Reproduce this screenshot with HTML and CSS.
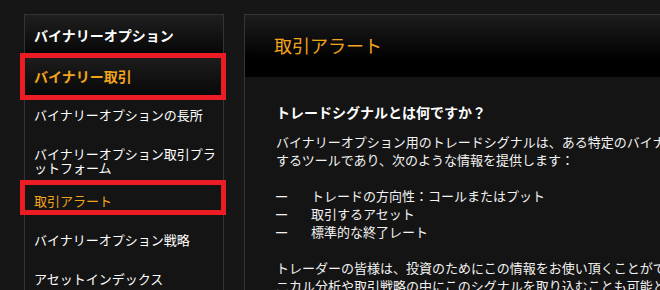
FILE: index.html
```html
<!DOCTYPE html>
<html lang="ja">
<head>
<meta charset="utf-8">
<title>取引アラート</title>
<link rel="stylesheet" href="styles.css">
</head>
<body>
<div class="page">
  <aside class="side">
    <div class="side-head">バイナリーオプション</div>
    <ul class="side-list">
      <li class="item active mark mark-a"><a href="#">バイナリー取引</a></li>
      <li class="item"><a href="#">バイナリーオプションの長所</a></li>
      <li class="item item-wrap"><a href="#">バイナリーオプション取引プラットフォーム</a></li>
      <li class="item current mark mark-b"><a href="#">取引アラート</a></li>
      <li class="item"><a href="#">バイナリーオプション戦略</a></li>
      <li class="item"><a href="#">アセットインデックス</a></li>
    </ul>
  </aside>
  <main class="panel">
    <div class="panel-head"><h1 class="panel-title">取引アラート</h1></div>
    <div class="panel-body">
      <h2 class="q">トレードシグナルとは何ですか？</h2>
      <p class="text">バイナリーオプション用のトレードシグナルは、ある特定のバイナリーオプション取引について推奨<br>するツールであり、次のような情報を提供します：</p>
      <ul class="dash-list">
        <li><span class="dash">—</span>トレードの方向性：コールまたはプット</li>
        <li><span class="dash">—</span>取引するアセット</li>
        <li><span class="dash">—</span>標準的な終了レート</li>
      </ul>
      <p class="text">トレーダーの皆様は、投資のためにこの情報をお使い頂くことができます。また、テク<br>ニカル分析や取引戦略の中にこのシグナルを取り込むことも可能となります。</p>
    </div>
  </main>
</div>
</body>
</html>
```

FILE: styles.css
```css
html, body {
  margin: 0;
  padding: 0;
  overflow: hidden;
  background: #161616;
}
body {
  font-family: "Noto Sans CJK JP", "Noto Sans", sans-serif;
  color: #fff;
  width: 660px;
  height: 290px;
}
.page {
  display: flex;
  align-items: flex-start;
  gap: 20px;
  padding: 14px 0 0 24px;
  width: 900px;
}
.side {
  width: 200px;
  box-sizing: border-box;
  border: 1px solid #343434;
  background: #141414;
  flex: none;
}
.side-head {
  padding: 12px 5px 14px 9px;
  font-size: 14px;
  line-height: 16px;
  font-weight: bold;
  color: #fff;
  background: linear-gradient(#1f1f1f, #050505);
}
.side-list {
  list-style: none;
  margin: 0;
  padding: 0 0 20px;
}
.item {
  position: relative;
}
.item a {
  display: block;
  padding: 12px 5px 13px 9px;
  font-size: 13px;
  line-height: 14px;
  color: #fff;
  text-decoration: none;
  line-break: normal;
}
.item-wrap a {
  padding-bottom: 7px;
}
.item.active a {
  font-size: 14px;
  font-weight: bold;
  color: #f2a41c;
  background: linear-gradient(#1d1d1d, #080808);
}
.item.current a {
  color: #f2a41c;
}
.mark::after {
  content: "";
  position: absolute;
  border: 5px solid #ec1c24;
  pointer-events: none;
}
.mark-a::after {
  left: -5px;
  right: -3px;
  top: -4px;
  bottom: -4px;
}
.mark-b::after {
  left: -5px;
  right: -3px;
  top: -2px;
  bottom: 6px;
}
.panel {
  width: 640px;
  flex: none;
  box-sizing: border-box;
  border: 1px solid #343434;
  background: #141414;
}
.panel-head {
  padding: 18px 20px 20px 29px;
  background: linear-gradient(#1d1d1d, #000 72%);
}
.panel-title {
  margin: 0;
  font-size: 18px;
  line-height: 24px;
  font-weight: normal;
  color: #f2a41c;
}
.panel-body {
  padding: 26px 20px 30px 31px;
  color: #f2f2f2;
  font-size: 13px;
  line-height: 18px;
  white-space: nowrap;
}
.q {
  margin: 0 0 12px;
  font-size: 14px;
  line-height: 18px;
  font-weight: bold;
  color: #fff;
}
.text {
  margin: 0 0 18px;
}
.dash-list {
  list-style: none;
  margin: 0 0 18px;
  padding: 0;
}
.dash-list li {
  height: 18px;
}
.dash {
  display: inline-block;
  vertical-align: top;
  width: 35px;
  line-height: 18px;
  font-family: "Liberation Sans", sans-serif;
  font-weight: bold;
  font-size: 11px;
}
```
